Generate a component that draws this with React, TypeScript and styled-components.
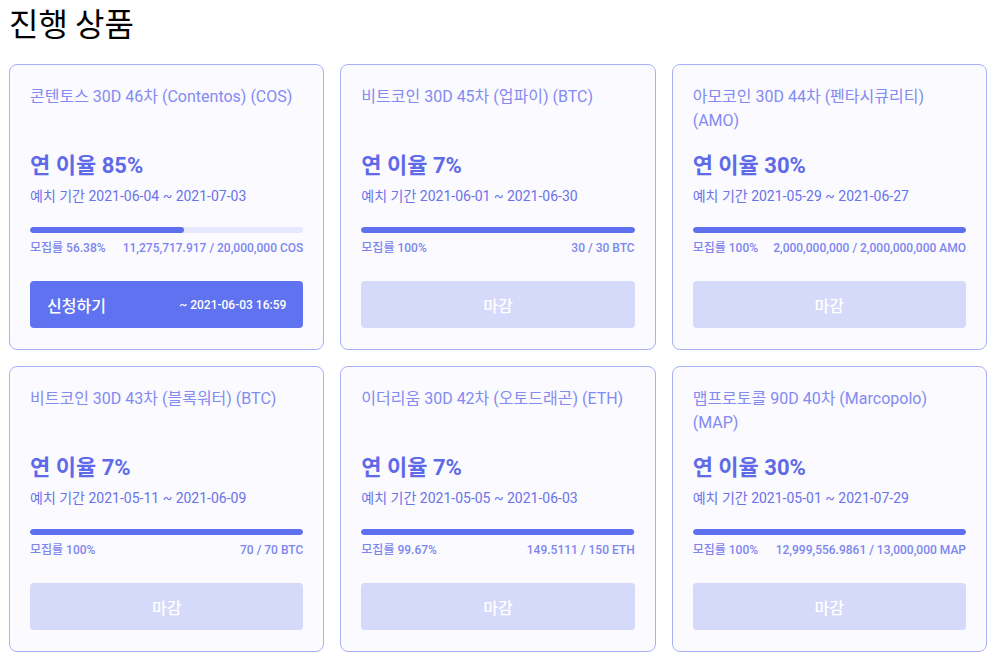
import styled, { createGlobalStyle } from "styled-components";

const GlobalStyle = createGlobalStyle`
  body {
    margin: 0;
    background: #ffffff;
    font-family: Roboto, "Noto Sans CJK KR", sans-serif;
  }
`;

type Product = {
  title: string;
  rate: string;
  start: string;
  end: string;
  percent: number;
  amount: string;
  deadline?: string;
};

const products: Product[] = [
  {
    title: "콘텐토스 30D 46차 (Contentos) (COS)",
    rate: "85%",
    start: "2021-06-04",
    end: "2021-07-03",
    percent: 56.38,
    amount: "11,275,717.917 / 20,000,000 COS",
    deadline: "~ 2021-06-03 16:59",
  },
  {
    title: "비트코인 30D 45차 (업파이) (BTC)",
    rate: "7%",
    start: "2021-06-01",
    end: "2021-06-30",
    percent: 100,
    amount: "30 / 30 BTC",
  },
  {
    title: "아모코인 30D 44차 (펜타시큐리티) (AMO)",
    rate: "30%",
    start: "2021-05-29",
    end: "2021-06-27",
    percent: 100,
    amount: "2,000,000,000 / 2,000,000,000 AMO",
  },
  {
    title: "비트코인 30D 43차 (블록워터) (BTC)",
    rate: "7%",
    start: "2021-05-11",
    end: "2021-06-09",
    percent: 100,
    amount: "70 / 70 BTC",
  },
  {
    title: "이더리움 30D 42차 (오토드래곤) (ETH)",
    rate: "7%",
    start: "2021-05-05",
    end: "2021-06-03",
    percent: 99.67,
    amount: "149.5111 / 150 ETH",
  },
  {
    title: "맵프로토콜 90D 40차 (Marcopolo) (MAP)",
    rate: "30%",
    start: "2021-05-01",
    end: "2021-07-29",
    percent: 100,
    amount: "12,999,556.9861 / 13,000,000 MAP",
  },
];

const Page = styled.div`
  padding: 2px 9px 12px;
`;

const Heading = styled.h1`
  margin: 0 0 22px;
  font-family: "Noto Sans CJK KR", sans-serif;
  font-size: 32px;
  font-weight: 400;
  line-height: 40px;
  color: #000000;
`;

const Grid = styled.div`
  width: 978px;
  display: grid;
  grid-template-columns: repeat(3, 1fr);
  gap: 16px;
`;

const Card = styled.div`
  background: #fafaff;
  border: 1px solid #a9b0f7;
  border-radius: 8px;
  padding: 20px 20px 21px;
  display: flex;
  flex-direction: column;
`;

const Title = styled.div`
  min-height: 48px;
  font-size: 16px;
  line-height: 24px;
  color: #838bf1;
`;

const Rate = styled.div`
  margin-top: 18px;
  font-size: 22px;
  font-weight: 700;
  line-height: 30px;
  color: #5f6ae8;
`;

const Period = styled.div`
  margin-top: 5px;
  font-size: 14px;
  line-height: 21px;
  color: #6a73e9;
`;

const Track = styled.div`
  margin-top: 20px;
  height: 6px;
  border-radius: 3px;
  background: #e6e8fd;
  overflow: hidden;
`;

const Fill = styled.div`
  height: 100%;
  border-radius: 3px;
  background: #5f70ee;
`;

const Stats = styled.div`
  margin-top: 6px;
  display: flex;
  justify-content: space-between;
  font-size: 12px;
  font-weight: 500;
  line-height: 18px;
  color: #7e86ee;
`;

const Button = styled.button<{ $open?: boolean }>`
  margin-top: 24px;
  height: 47px;
  border: none;
  border-radius: 4px;
  padding: 0 17px;
  display: flex;
  align-items: center;
  justify-content: ${(p) => (p.$open ? "space-between" : "center")};
  background: ${(p) => (p.$open ? "#5f72ef" : "#d5d9fa")};
  color: #ffffff;
  font-family: Roboto, "Noto Sans CJK KR", sans-serif;
  font-size: 16px;
  font-weight: 500;
  cursor: ${(p) => (p.$open ? "pointer" : "default")};
`;

const Deadline = styled.span`
  font-size: 12px;
  font-weight: 500;
`;

export default function App() {
  return (
    <Page>
      <GlobalStyle />
      <Heading>진행 상품</Heading>
      <Grid>
        {products.map((p) => (
          <Card key={p.title}>
            <Title>{p.title}</Title>
            <Rate>연 이율 {p.rate}</Rate>
            <Period>
              예치 기간 {p.start} ~ {p.end}
            </Period>
            <Track>
              <Fill style={{ width: `${p.percent}%` }} />
            </Track>
            <Stats>
              <span>모집률 {p.percent}%</span>
              <span>{p.amount}</span>
            </Stats>
            {p.deadline ? (
              <Button $open>
                <span>신청하기</span>
                <Deadline>{p.deadline}</Deadline>
              </Button>
            ) : (
              <Button disabled>마감</Button>
            )}
          </Card>
        ))}
      </Grid>
    </Page>
  );
}
